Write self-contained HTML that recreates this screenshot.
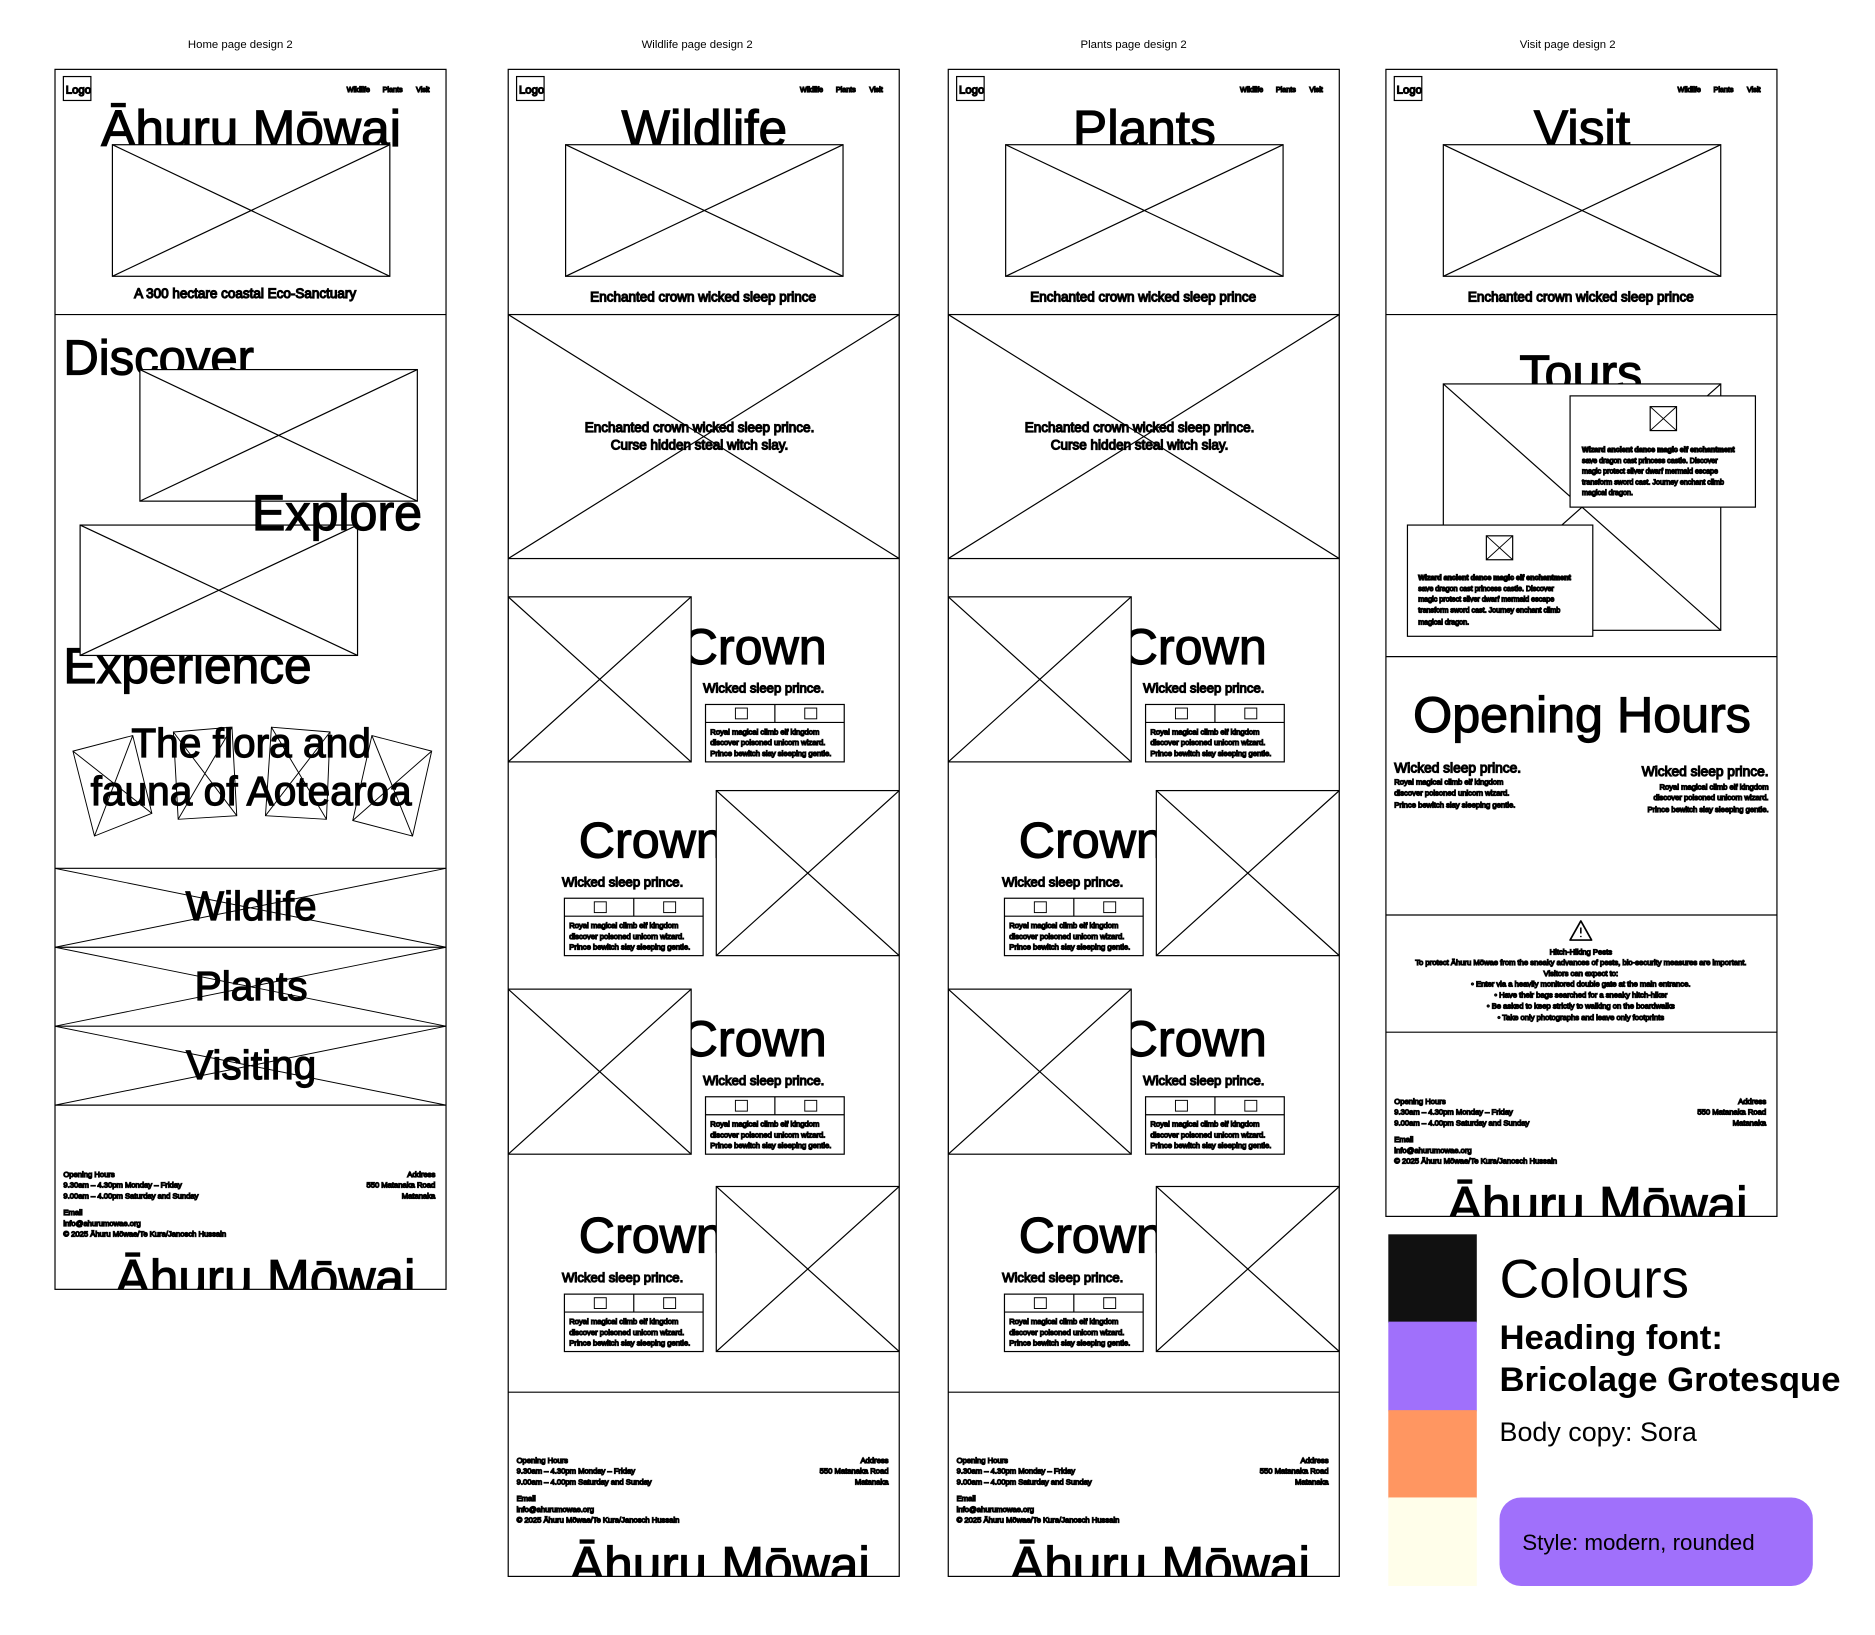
<!DOCTYPE html>
<html><head><meta charset="utf-8">
<style>
html,body{margin:0;padding:0;background:#fff;width:1875px;height:1635px;overflow:hidden}
svg{display:block}
text{font-family:"Liberation Sans",sans-serif;fill:#000}
.s{font-size:6.4px;fill:#555}
.n{font-size:6px;fill:#444}
.t{font-size:43px}
.cr{font-size:42px}
.cap{font-size:11.3px}
.w{font-size:11px}
</style></head><body>
<svg width="1875" height="1635" viewBox="0 0 1568 1367" preserveAspectRatio="none" xmlns="http://www.w3.org/2000/svg">
<defs>
<clipPath id="c1"><rect x="46" y="58" width="327" height="1020"/></clipPath>
<clipPath id="c2"><rect x="425" y="58" width="327" height="1260"/></clipPath>
<clipPath id="c3"><rect x="793" y="58" width="327" height="1260"/></clipPath>
<clipPath id="c4"><rect x="1159" y="58" width="327" height="959"/></clipPath>
<g id="card">
<rect x="0" y="0" width="116" height="48" fill="#fff" stroke="#000" stroke-width="1"/>
<line x1="0" y1="15" x2="116" y2="15" stroke="#000"/>
<line x1="58" y1="0" x2="58" y2="15" stroke="#000"/>
<rect x="25" y="3" width="10" height="9" fill="none" stroke="#000" stroke-width="0.8"/>
<rect x="83" y="3" width="10" height="9" fill="none" stroke="#000" stroke-width="0.8"/>
<text x="4" y="25" class="s">Royal magical climb elf kingdom</text>
<text x="4" y="34" class="s">discover poisoned unicorn  wizard.</text>
<text x="4" y="43" class="s">Prince bewitch slay sleeping gentle.</text>
</g>
<g id="hdr">
<rect x="7" y="6" width="23" height="20" fill="none" stroke="#000"/>
<text x="9" y="20" style="font-size:9.5px">Logo</text>
<text x="244" y="19" class="n">Wildlife</text>
<text x="274" y="19" class="n">Plants</text>
<text x="302" y="19" class="n">Visit</text>
</g>
<g id="foot">
<text x="7" y="0" class="s">Opening Hours</text>
<text x="7" y="9" class="s">9.30am – 4.30pm Monday – Friday</text>
<text x="7" y="18" class="s">9.00am – 4.00pm Saturday and Sunday</text>
<text x="7" y="32" class="s">Email</text>
<text x="7" y="41" class="s">info@ahurumowae.org</text>
<text x="7" y="50" class="s">© 2025 Āhuru Mōwae/Te Kura/Janosch Hussain</text>
<text x="318" y="0" class="s" text-anchor="end">Address</text>
<text x="318" y="9" class="s" text-anchor="end">550 Matanaka Road</text>
<text x="318" y="18" class="s" text-anchor="end">Matanaka</text>
</g>
</defs>

<text x="201" y="40" style="font-size:9.5px" text-anchor="middle">Home page design 2</text>
<text x="583" y="40" style="font-size:9.5px" text-anchor="middle">Wildlife page design 2</text>
<text x="948" y="40" style="font-size:9.5px" text-anchor="middle">Plants page design 2</text>
<text x="1311" y="40" style="font-size:9.5px" text-anchor="middle">Visit page design 2</text>

<g fill="none" stroke="#000" stroke-width="1">
<g clip-path="url(#c1)">
<use href="#hdr" x="46" y="58"/>
<text x="210" y="122" class="t" text-anchor="middle">Āhuru Mōwai</text>
<rect x="94" y="121" width="232" height="110" fill="#fff" stroke="#000"/>
<path d="M94 121L326 231M326 121L94 231" stroke="#000"/>
<text x="205" y="249" class="cap" text-anchor="middle">A 300 hectare coastal Eco-Sanctuary</text>
<line x1="46" y1="263" x2="373" y2="263" stroke="#000"/>
<text x="53" y="313" style="font-size:41px">Discover</text>
<rect x="117" y="309" width="232" height="110" fill="#fff" stroke="#000"/>
<path d="M117 309L349 419M349 309L117 419" stroke="#000"/>
<text x="53" y="571" style="font-size:41.5px">Experience</text>
<rect x="67" y="439" width="232" height="109" fill="#fff" stroke="#000"/>
<path d="M67 439L299 548M299 439L67 548" stroke="#000"/>
<text x="353" y="443" style="font-size:42px" text-anchor="end">Explore</text>
<path d="M61 628L111 615L127 680L79 699Z M61 628L127 680 M111 615L79 699" stroke="#000" stroke-width="0.8"/>
<path d="M145 612L194 608L198 682L149 685Z M145 612L198 682 M194 608L149 685" stroke="#000" stroke-width="0.8"/>
<path d="M227 608L276 612L273 685L222 682Z M227 608L273 685 M276 612L222 682" stroke="#000" stroke-width="0.8"/>
<path d="M311 615L361 628L345 699L295 686Z M311 615L345 699 M361 628L295 686" stroke="#000" stroke-width="0.8"/>
<text x="210" y="633" style="font-size:34px" text-anchor="middle">The flora and</text>
<text x="210" y="673" style="font-size:34px" text-anchor="middle">fauna of Aotearoa</text>
<line x1="46" y1="726" x2="373" y2="726" stroke="#000"/>
<path d="M46 726L373 792M373 726L46 792M46 792L373 858M373 792L46 858M46 858L373 924M373 858L46 924" stroke="#000" stroke-width="0.8"/>
<line x1="46" y1="792" x2="373" y2="792" stroke="#000"/>
<line x1="46" y1="858" x2="373" y2="858" stroke="#000"/>
<line x1="46" y1="924" x2="373" y2="924" stroke="#000"/>
<text x="210" y="769" style="font-size:34px" text-anchor="middle">Wildlife</text>
<text x="210" y="836" style="font-size:34px" text-anchor="middle">Plants</text>
<text x="210" y="902" style="font-size:34px" text-anchor="middle">Visiting</text>
<use href="#foot" x="46" y="984"/>
<text x="222" y="1083" class="t" text-anchor="middle">Āhuru Mōwai</text>
</g>
<rect x="46" y="58" width="327" height="1020" stroke="#000"/>

<g clip-path="url(#c2)">
<use href="#hdr" x="425" y="58"/>
<text x="589" y="122" class="t" text-anchor="middle">Wildlife</text>
<rect x="473" y="121" width="232" height="110" fill="#fff" stroke="#000"/>
<path d="M473 121L705 231M705 121L473 231" stroke="#000"/>
<text x="588" y="252" class="cap" text-anchor="middle">Enchanted crown wicked sleep prince</text>
<rect x="425" y="263" width="327" height="204" stroke="#000"/>
<path d="M425 263L752 467M752 263L425 467" stroke="#000"/>
<text x="585" y="361" class="cap" text-anchor="middle">Enchanted crown wicked sleep prince.</text>
<text x="585" y="376" class="cap" text-anchor="middle">Curse hidden steal witch slay.</text>
<text x="570" y="555" class="cr">Crown</text>
<rect x="425" y="499" width="153" height="138" fill="#fff" stroke="#000"/>
<path d="M425 499L578 637M578 499L425 637" stroke="#000"/>
<text x="588" y="579" class="w">Wicked sleep prince.</text>
<use href="#card" x="590" y="589"/>
<text x="484" y="717" class="cr">Crown</text>
<rect x="599" y="661" width="153" height="138" fill="#fff" stroke="#000"/>
<path d="M599 661L752 799M752 661L599 799" stroke="#000"/>
<text x="470" y="741" class="w">Wicked sleep prince.</text>
<use href="#card" x="472" y="751"/>
<text x="570" y="883" class="cr">Crown</text>
<rect x="425" y="827" width="153" height="138" fill="#fff" stroke="#000"/>
<path d="M425 827L578 965M578 827L425 965" stroke="#000"/>
<text x="588" y="907" class="w">Wicked sleep prince.</text>
<use href="#card" x="590" y="917"/>
<text x="484" y="1047" class="cr">Crown</text>
<rect x="599" y="992" width="153" height="138" fill="#fff" stroke="#000"/>
<path d="M599 992L752 1130M752 992L599 1130" stroke="#000"/>
<text x="470" y="1072" class="w">Wicked sleep prince.</text>
<use href="#card" x="472" y="1082"/>
<line x1="425" y1="1164" x2="752" y2="1164" stroke="#000"/>
<use href="#foot" x="425" y="1223"/>
<text x="602" y="1323" class="t" text-anchor="middle">Āhuru Mōwai</text>
</g>
<rect x="425" y="58" width="327" height="1260" stroke="#000"/>

<g clip-path="url(#c3)">
<use href="#hdr" x="793" y="58"/>
<text x="957" y="122" class="t" text-anchor="middle">Plants</text>
<rect x="841" y="121" width="232" height="110" fill="#fff" stroke="#000"/>
<path d="M841 121L1073 231M1073 121L841 231" stroke="#000"/>
<text x="956" y="252" class="cap" text-anchor="middle">Enchanted crown wicked sleep prince</text>
<rect x="793" y="263" width="327" height="204" stroke="#000"/>
<path d="M793 263L1120 467M1120 263L793 467" stroke="#000"/>
<text x="953" y="361" class="cap" text-anchor="middle">Enchanted crown wicked sleep prince.</text>
<text x="953" y="376" class="cap" text-anchor="middle">Curse hidden steal witch slay.</text>
<text x="938" y="555" class="cr">Crown</text>
<rect x="793" y="499" width="153" height="138" fill="#fff" stroke="#000"/>
<path d="M793 499L946 637M946 499L793 637" stroke="#000"/>
<text x="956" y="579" class="w">Wicked sleep prince.</text>
<use href="#card" x="958" y="589"/>
<text x="852" y="717" class="cr">Crown</text>
<rect x="967" y="661" width="153" height="138" fill="#fff" stroke="#000"/>
<path d="M967 661L1120 799M1120 661L967 799" stroke="#000"/>
<text x="838" y="741" class="w">Wicked sleep prince.</text>
<use href="#card" x="840" y="751"/>
<text x="938" y="883" class="cr">Crown</text>
<rect x="793" y="827" width="153" height="138" fill="#fff" stroke="#000"/>
<path d="M793 827L946 965M946 827L793 965" stroke="#000"/>
<text x="956" y="907" class="w">Wicked sleep prince.</text>
<use href="#card" x="958" y="917"/>
<text x="852" y="1047" class="cr">Crown</text>
<rect x="967" y="992" width="153" height="138" fill="#fff" stroke="#000"/>
<path d="M967 992L1120 1130M1120 992L967 1130" stroke="#000"/>
<text x="838" y="1072" class="w">Wicked sleep prince.</text>
<use href="#card" x="840" y="1082"/>
<line x1="793" y1="1164" x2="1120" y2="1164" stroke="#000"/>
<use href="#foot" x="793" y="1223"/>
<text x="970" y="1323" class="t" text-anchor="middle">Āhuru Mōwai</text>
</g>
<rect x="793" y="58" width="327" height="1260" stroke="#000"/>

<g clip-path="url(#c4)">
<use href="#hdr" x="1159" y="58"/>
<text x="1323" y="122" class="t" text-anchor="middle">Visit</text>
<rect x="1207" y="121" width="232" height="110" fill="#fff" stroke="#000"/>
<path d="M1207 121L1439 231M1439 121L1207 231" stroke="#000"/>
<text x="1322" y="252" class="cap" text-anchor="middle">Enchanted crown wicked sleep prince</text>
<line x1="1159" y1="263" x2="1486" y2="263" stroke="#000"/>
<text x="1322" y="326" style="font-size:42px" text-anchor="middle">Tours</text>
<rect x="1207" y="321" width="232" height="206" fill="#fff" stroke="#000"/>
<path d="M1207 321L1439 527M1439 321L1207 527" stroke="#000"/>
<rect x="1313" y="331" width="155" height="93" fill="#fff" stroke="#000"/>
<rect x="1380" y="340" width="22" height="20" stroke="#000"/>
<path d="M1380 340L1402 360M1402 340L1380 360" stroke="#000" stroke-width="0.8"/>
<text x="1323" y="378" style="font-size:6px;font-weight:bold;fill:#333">Wizard ancient dance magic elf enchantment</text>
<text x="1323" y="387" style="font-size:6px;fill:#555">save dragon cast princess  castle. Discover</text>
<text x="1323" y="396" style="font-size:6px;fill:#555">magic protect silver dwarf mermaid escape</text>
<text x="1323" y="405" style="font-size:6px;fill:#555">transform  sword cast. Journey enchant climb</text>
<text x="1323" y="414" style="font-size:6px;fill:#555">magical dragon.</text>
<rect x="1177" y="439" width="155" height="93" fill="#fff" stroke="#000"/>
<rect x="1243" y="448" width="22" height="20" stroke="#000"/>
<path d="M1243 448L1265 468M1265 448L1243 468" stroke="#000" stroke-width="0.8"/>
<text x="1186" y="485" style="font-size:6px;font-weight:bold;fill:#333">Wizard ancient dance magic elf enchantment</text>
<text x="1186" y="494" style="font-size:6px;fill:#555">save dragon cast princess  castle. Discover</text>
<text x="1186" y="503" style="font-size:6px;fill:#555">magic protect silver dwarf mermaid escape</text>
<text x="1186" y="512" style="font-size:6px;fill:#555">transform  sword cast. Journey enchant climb</text>
<text x="1186" y="522" style="font-size:6px;fill:#555">magical dragon.</text>
<line x1="1159" y1="549" x2="1486" y2="549" stroke="#000"/>
<text x="1323" y="612" style="font-size:42px" text-anchor="middle">Opening Hours</text>
<text x="1166" y="646" style="font-size:11.5px">Wicked sleep prince.</text>
<text x="1166" y="656" class="s">Royal magical climb elf kingdom</text>
<text x="1166" y="665" class="s">discover poisoned unicorn  wizard.</text>
<text x="1166" y="675" class="s">Prince bewitch slay sleeping gentle.</text>
<text x="1479" y="649" style="font-size:11.5px" text-anchor="end">Wicked sleep prince.</text>
<text x="1479" y="660" class="s" text-anchor="end">Royal magical climb elf kingdom</text>
<text x="1479" y="669" class="s" text-anchor="end">discover poisoned unicorn  wizard.</text>
<text x="1479" y="679" class="s" text-anchor="end">Prince bewitch slay sleeping gentle.</text>
<line x1="1159" y1="765" x2="1486" y2="765" stroke="#000"/>
<path d="M1322 770L1331 786L1313 786Z" stroke="#000" stroke-width="1.4" stroke-linejoin="round"/>
<path d="M1322 775.5V780.5M1322 782.5V783.5" stroke="#000" stroke-width="1.3"/>
<text x="1322" y="798" class="s" text-anchor="middle">Hitch-Hiking Pests</text>
<text x="1322" y="807" class="s" text-anchor="middle">To protect Āhuru Mōwae from the sneaky advances of pests, bio-security measures are important.</text>
<text x="1322" y="816" class="s" text-anchor="middle">Visitors can expect to:</text>
<text x="1322" y="825" class="s" text-anchor="middle">• Enter via a heavily monitored double gate at the main entrance.</text>
<text x="1322" y="834" class="s" text-anchor="middle">• Have their bags searched for a sneaky hitch-hiker</text>
<text x="1322" y="843" class="s" text-anchor="middle">• Be asked to keep strictly to walking on the boardwalks</text>
<text x="1322" y="853" class="s" text-anchor="middle">• Take only photographs and leave only footprints</text>
<line x1="1159" y1="863" x2="1486" y2="863" stroke="#000"/>
<use href="#foot" x="1159" y="923"/>
<text x="1336" y="1022" class="t" text-anchor="middle">Āhuru Mōwai</text>
</g>
<rect x="1159" y="58" width="327" height="959" stroke="#000"/>
</g>

<rect x="1161" y="1032" width="74" height="74" fill="#111"/>
<rect x="1161" y="1105" width="74" height="75" fill="#a070fb"/>
<rect x="1161" y="1179" width="74" height="74" fill="#ff9661"/>
<rect x="1161" y="1252" width="74" height="74" fill="#fffeea"/>
<text x="1254" y="1085" style="font-size:46px">Colours</text>
<text x="1254" y="1128" style="font-size:29px;font-weight:bold">Heading font:</text>
<text x="1254" y="1163" style="font-size:29px;font-weight:bold">Bricolage Grotesque</text>
<text x="1254" y="1205" style="font-size:22.5px">Body copy: Sora</text>
<rect x="1254" y="1252" width="262" height="74" rx="18" fill="#a070fb"/>
<text x="1273" y="1296" style="font-size:18.7px">Style: modern, rounded</text>
</svg>
</body></html>
